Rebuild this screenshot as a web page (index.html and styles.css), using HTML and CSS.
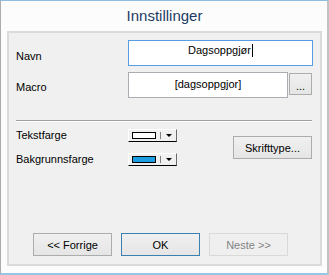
FILE: index.html
```html
<!DOCTYPE html>
<html lang="no">
<head>
  <meta charset="UTF-8" />
  <title>Innstillinger</title>
  <link rel="stylesheet" href="styles.css">
</head>
<body>
  <div class="window">
    <div class="title">Innstillinger</div>
    <div class="panel">
      <div class="row">
        <div class="label">Navn</div>
        <div class="field field-focus">Dagsoppgjør<span class="caret"></span></div>
      </div>
      <div class="row row-macro">
        <div class="label">Macro</div>
        <div class="field field-macro">[dagsoppgjor]</div>
        <button class="btn btn-dots">...</button>
      </div>

      <div class="sep"></div>

      <div class="colors">
        <div class="color-list">
          <div class="color-row">
            <div class="label">Tekstfarge</div>
            <div class="combo">
              <span class="swatch swatch-white"></span>
              <span class="combo-sep"></span>
              <span class="arrow"></span>
            </div>
          </div>
          <div class="color-row">
            <div class="label">Bakgrunnsfarge</div>
            <div class="combo">
              <span class="swatch swatch-blue"></span>
              <span class="combo-sep"></span>
              <span class="arrow"></span>
            </div>
          </div>
        </div>
        <button class="btn btn-font">Skrifttype...</button>
      </div>

      <div class="nav">
        <button class="btn">&lt;&lt; Forrige</button>
        <button class="btn btn-default">OK</button>
        <button class="btn btn-disabled">Neste &gt;&gt;</button>
      </div>
    </div>
  </div>
</body>
</html>
```
FILE: styles.css
```css
* { box-sizing: border-box; margin: 0; padding: 0; }
body {
  width: 329px; height: 275px; overflow: hidden;
  font-family: 'Liberation Sans', Arial, sans-serif;
  font-size: 11px; color: #000;
  background: #fcfcfc;
}
.window {
  height: 275px;
  display: flex; flex-direction: column;
  background: #fcfcfc;
  border-top: 1px solid #8dbde0;
  border-left: 1px solid #acacac;
  border-right: 2px solid #c2c2c2;
  border-bottom: 2px solid #9ac6e6;
  padding: 0 5px 7px 6px;
}
.title {
  height: 30px; line-height: 30px;
  text-align: center;
  font-size: 15px; color: #1e3a64;
}
.panel {
  flex: 1;
  display: flex; flex-direction: column;
  background: #f0f0f0;
  border: 2px solid #dadada;
  padding: 7px 7px 8px 7px;
}
.row { display: flex; height: 26px; }
.row-macro { margin-top: 6px; }
.label { width: 112px; flex: none; line-height: 13px; }
.row .label { padding-top: 10px; }
.row-macro .label { padding-top: 9px; }
.field {
  background: #fff;
  border: 1px solid #abadb3;
  text-align: center;
  line-height: 13px;
}
.field-focus { width: 185px; border-color: #569de5; padding-top: 3px; }
.field-macro { width: 160px; padding-top: 5px; }
.caret {
  display: inline-block; width: 1px; height: 13px;
  background: #000; vertical-align: -3px; margin-left: 1px;
}
.btn {
  font-family: inherit; font-size: 11px; color: #000;
  height: 23px; width: 79px;
  border: 1px solid #acacac;
  background: linear-gradient(#f0f0f0, #e5e5e5);
}
.btn-dots {
  width: 23px; height: 22px;
  margin: 1px 0 0 1px;
  padding-top: 4px;
}
.btn-default { border-color: #3c7fb1; }
.btn-disabled {
  border-color: #d9d9d9; background: #efefef; color: #838383;
}
.sep {
  margin: 22px 1px 0 0;
  border-top: 1px solid #a0a0a0;
  border-bottom: 1px solid #fff;
}
.colors {
  margin-top: 7px;
  display: flex; align-items: center;
}
.color-list { display: flex; flex-direction: column; gap: 11px; }
.color-row { display: flex; height: 13px; }
.combo {
  width: 49px; height: 13px;
  display: flex; align-items: flex-start;
  background: #f0f0f0;
  border-top: 1px solid #fff;
  border-left: 1px solid #fff;
  border-right: 1px solid #696969;
  border-bottom: 1px solid #000;
  padding: 2px 0 0 3px;
}
.swatch {
  width: 24px; height: 7px;
  border: 1px solid #000;
}
.swatch-white { background: #fff; }
.swatch-blue { background: #1c9ee0; }
.combo-sep {
  width: 1px; height: 7px;
  margin-left: 4px;
  background: #808080;
}
.arrow {
  margin: 2px 0 0 5px;
  width: 0; height: 0;
  border-left: 3px solid transparent;
  border-right: 3px solid transparent;
  border-top: 3px solid #000;
}
.btn-font { margin: 0 1px 0 auto; }
.nav {
  margin-top: auto;
  padding-left: 17px;
  display: flex; gap: 9px;
}
```
